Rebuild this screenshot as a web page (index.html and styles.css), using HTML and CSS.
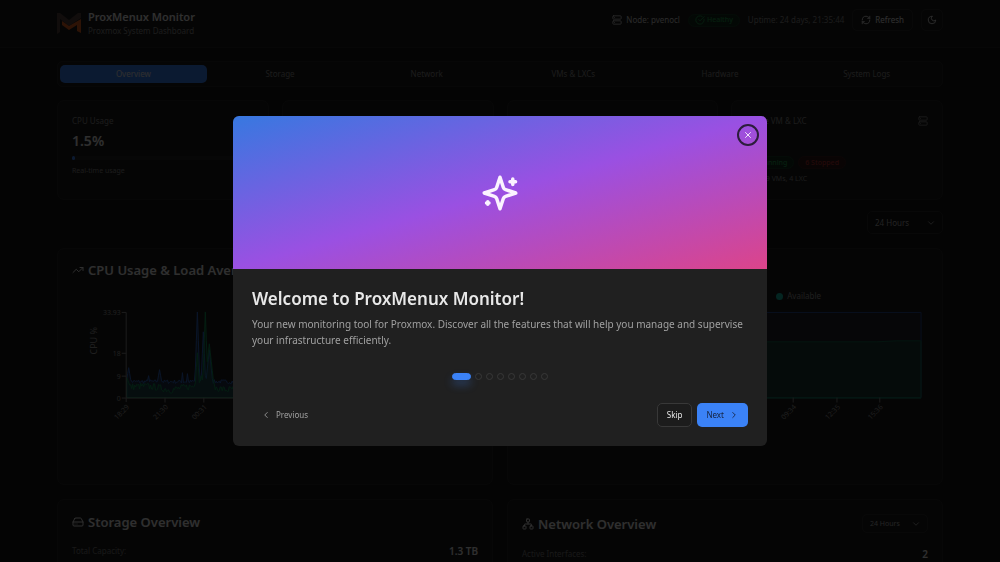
FILE: index.html
```html
<!DOCTYPE html>
<html lang="en">
<head>
    <meta charset="UTF-8">
    <meta name="viewport" content="width=device-width, initial-scale=1.0">
    <title>ProxMenux Monitor</title>
    <link rel="stylesheet" href="styles.css">
</head>
<body>
    <header class="topbar">
        <div class="brand">
            <svg class="logo" viewBox="0 0 24 24">
                <path d="M0 2 L3 2 L12 9 L21 2 L24 2 L24 7 L12 15 L3 8 L3 21 L0 23 Z" fill="#55403c"/>
                <path d="M5 10 L12 15 L24 8 L24 22 L20 20 L20 14 L12 19 L5 14 Z" fill="#e0601f"/>
            </svg>
            <div>
                <h1>ProxMenux Monitor</h1>
                <p>Proxmox System Dashboard</p>
            </div>
        </div>
        <div class="top-actions">
            <span class="node">
                <svg class="icon" viewBox="0 0 24 24"><rect x="2" y="2" width="20" height="8" rx="2"/><rect x="2" y="14" width="20" height="8" rx="2"/><path d="M6 6h.01M6 18h.01"/></svg>
                Node: pvenocl
            </span>
            <span class="badge green">
                <svg class="icon" viewBox="0 0 24 24"><path d="M21.8 10A10 10 0 1 1 17 3.3"/><path d="m9 11 3 3L22 4"/></svg>
                Healthy
            </span>
            <span class="uptime">Uptime: 24 days, 21:35:44</span>
            <button class="ghost">
                <svg class="icon" viewBox="0 0 24 24"><path d="M3 12a9 9 0 0 1 9-9 9.75 9.75 0 0 1 6.74 2.74L21 8"/><path d="M21 3v5h-5"/><path d="M21 12a9 9 0 0 1-9 9 9.75 9.75 0 0 1-6.74-2.74L3 16"/><path d="M8 16H3v5"/></svg>
                Refresh
            </button>
            <button class="ghost square" aria-label="Toggle theme">
                <svg class="icon" viewBox="0 0 24 24"><path d="M12 3a6 6 0 0 0 9 9 9 9 0 1 1-9-9Z"/></svg>
            </button>
        </div>
    </header>

    <main>
        <nav class="tabs">
            <button class="active">Overview</button>
            <button>Storage</button>
            <button>Network</button>
            <button>VMs &amp; LXCs</button>
            <button>Hardware</button>
            <button>System Logs</button>
        </nav>

        <section class="stats">
            <div class="card">
                <div class="label">CPU Usage</div>
                <div class="value">1.5%</div>
                <div class="bar"><div class="bar-fill" style="width: 1.5%"></div></div>
                <div class="note">Real-time usage</div>
            </div>
            <div class="card"></div>
            <div class="card"></div>
            <div class="card">
                <div class="label">
                    Active VM &amp; LXC
                    <svg class="icon" viewBox="0 0 24 24"><rect x="2" y="2" width="20" height="8" rx="2"/><rect x="2" y="14" width="20" height="8" rx="2"/><path d="M6 6h.01M6 18h.01"/></svg>
                </div>
                <div class="value">7</div>
                <div class="badges">
                    <span class="badge green">7 Running</span>
                    <span class="badge red">6 Stopped</span>
                </div>
                <div class="note">Total: 9 VMs, 4 LXC</div>
            </div>
        </section>

        <div class="range">
            <div class="select">
                <select aria-label="Time range"><option>24 Hours</option></select>
                <svg class="icon" viewBox="0 0 24 24"><path d="m6 9 6 6 6-6"/></svg>
            </div>
        </div>

        <section class="panels">
            <div class="card chart-card">
                <h2>
                    <svg class="icon" viewBox="0 0 24 24"><path d="M22 7 13.5 15.5l-5-5L2 17"/><path d="M16 7h6v6"/></svg>
                    CPU Usage &amp; Load Average
                </h2>
                <svg class="chart" viewBox="0 20 436 130">
                    <path id="loadArea" class="load"/>
                    <path id="cpuArea" class="cpu"/>
                    <path class="axis" d="M64 26.5h4.500v86h348M64 67.500h4.500M64 90.500h4.500M64 112.500h4.500v4M107.500 112v5M146.500 112v5"/>
                    <g class="ticks" text-anchor="end">
                        <text x="63" y="29">33.93</text>
                        <text x="63" y="70">18</text>
                        <text x="63" y="93">9</text>
                        <text x="63" y="115">0</text>
                        <text transform="translate(72 122) rotate(-45)">18:29</text>
                        <text transform="translate(111 122) rotate(-45)">21:30</text>
                        <text transform="translate(150 122) rotate(-45)">00:31</text>
                    </g>
                    <text class="axis-title" text-anchor="middle" transform="translate(39 55) rotate(-90)">CPU %</text>
                </svg>
            </div>
            <div class="card chart-card">
                <div class="legend"><i></i>Available</div>
                <svg class="chart" viewBox="0 20 436 130">
                    <path class="total" d="M68 26.5H415V112H68Z"/>
                    <path class="available" d="M68 56 L370 56 L390 55 H415V112H68Z"/>
                    <path class="edge" d="M68 112.500H415"/>
                    <path class="axis" d="M286.500 112v5M330.500 112v5M373.500 112v5"/>
                    <g class="ticks" text-anchor="end">
                        <text transform="translate(290 122) rotate(-45)">09:34</text>
                        <text transform="translate(334 122) rotate(-45)">12:35</text>
                        <text transform="translate(377 122) rotate(-45)">15:36</text>
                    </g>
                </svg>
            </div>
            <div class="card">
                <h2>
                    <svg class="icon" viewBox="0 0 24 24"><path d="M2 12h20M5.450 5.110 2 12v6a2 2 0 0 0 2 2h16a2 2 0 0 0 2-2v-6l-3.450-6.890A2 2 0 0 0 16.760 4H7.240a2 2 0 0 0-1.790 1.110zM6 16h.01M10 16h.01"/></svg>
                    Storage Overview
                </h2>
                <div class="row"><span>Total Capacity:</span><strong>1.3 TB</strong></div>
            </div>
            <div class="card">
                <div class="panel-head">
                    <h2>
                        <svg class="icon" viewBox="0 0 24 24"><rect x="16" y="16" width="6" height="6" rx="1"/><rect x="2" y="16" width="6" height="6" rx="1"/><rect x="9" y="2" width="6" height="6" rx="1"/><path d="M5 16v-3a1 1 0 0 1 1-1h12a1 1 0 0 1 1 1v3M12 12V8"/></svg>
                        Network Overview
                    </h2>
                    <div class="select small">
                        <select aria-label="Network time range"><option>24 Hours</option></select>
                        <svg class="icon" viewBox="0 0 24 24"><path d="m6 9 6 6 6-6"/></svg>
                    </div>
                </div>
                <div class="row"><span>Active Interfaces:</span><strong>2</strong></div>
            </div>
        </section>
    </main>

    <div class="overlay">
        <div class="modal" role="dialog" aria-modal="true" aria-labelledby="welcomeTitle">
            <div class="hero">
                <svg class="sparkles" viewBox="0 0 24 24"><path d="M12 3 10.088 8.813a2 2 0 0 1-1.275 1.275L3 12l5.813 1.912a2 2 0 0 1 1.275 1.275L12 21l1.912-5.813a2 2 0 0 1 1.275-1.275L21 12l-5.813-1.912a2 2 0 0 1-1.275-1.275Z"/><path d="M19.300 4v3.200M17.700 5.600h3.200M5 17v1.400M4.300 17.700h1.400"/></svg>
                <button class="close" aria-label="Close">
                    <svg class="icon" viewBox="0 0 24 24"><path d="M18 6 6 18M6 6l12 12"/></svg>
                </button>
            </div>
            <div class="modal-body">
                <h2 id="welcomeTitle">Welcome to ProxMenux Monitor!</h2>
                <p>Your new monitoring tool for Proxmox. Discover all the features that will help you manage and supervise your infrastructure efficiently.</p>
                <div class="dots">
                    <button class="current" aria-label="Step 1"></button>
                    <button aria-label="Step 2"></button>
                    <button aria-label="Step 3"></button>
                    <button aria-label="Step 4"></button>
                    <button aria-label="Step 5"></button>
                    <button aria-label="Step 6"></button>
                    <button aria-label="Step 7"></button>
                    <button aria-label="Step 8"></button>
                </div>
                <div class="modal-actions">
                    <button class="prev">
                        <svg class="icon" viewBox="0 0 24 24"><path d="m15 18-6-6 6-6"/></svg>
                        Previous
                    </button>
                    <button class="skip">Skip</button>
                    <button class="next">
                        Next
                        <svg class="icon" viewBox="0 0 24 24"><path d="m9 18 6-6-6-6"/></svg>
                    </button>
                </div>
            </div>
        </div>
    </div>

    <script src="charts.js"></script>
</body>
</html>
```
FILE: styles.css
```css
* {
    box-sizing: border-box;
}
body {
    margin: 0;
    background: #141414;
    color: #e8e8e8;
    font-family: "Noto Sans", "Open Sans", sans-serif;
    font-size: 8px;
    line-height: 12px;
    overflow: hidden;
}
h1, h2, p {
    margin: 0;
}
button, select {
    font: inherit;
    color: inherit;
    background: none;
    border: none;
    padding: 0;
    cursor: pointer;
}
.icon {
    width: 10px;
    height: 10px;
    flex: none;
    fill: none;
    stroke: currentColor;
    stroke-width: 2;
    stroke-linecap: round;
    stroke-linejoin: round;
}

/* header */
.topbar {
    display: flex;
    justify-content: space-between;
    align-items: flex-start;
    height: 48px;
    padding: 9px 57px 0;
    background: #1c1c1c;
    border-bottom: 1px solid #262626;
}
.brand {
    display: flex;
    align-items: center;
    gap: 7px;
}
.logo {
    width: 24px;
    height: 24px;
}
.brand h1 {
    font-size: 11px;
    line-height: 16px;
    font-weight: 600;
}
.brand p {
    color: #8a8a8a;
}
.top-actions {
    display: flex;
    align-items: center;
    gap: 8px;
}
.node {
    display: flex;
    align-items: center;
    gap: 4px;
    color: #d0d0d0;
}
.uptime {
    color: #8a8a8a;
}
.badge {
    display: inline-flex;
    align-items: center;
    gap: 2px;
    height: 13px;
    padding: 0 6px;
    border-radius: 7px;
    font-size: 7px;
    font-weight: 500;
}
.green {
    color: #1f9a4c;
    background: #122c1d;
    border: 1px solid #163a24;
}
.red {
    color: #b03030;
    background: #2e1616;
    border: 1px solid #3a1a1a;
}
.ghost {
    display: flex;
    align-items: center;
    justify-content: center;
    gap: 4px;
    height: 22px;
    padding: 0 8px;
    border: 1px solid #2a2a2a;
    border-radius: 5px;
}
.square {
    width: 22px;
    padding: 0;
}

/* page */
main {
    padding: 13px 57px;
}
.tabs {
    display: grid;
    grid-template-columns: repeat(6, 1fr);
    height: 26px;
    padding: 3px 2px;
    background: #1c1c1c;
    border: 1px solid #262626;
    border-radius: 5px;
}
.tabs button {
    color: #8a8a8a;
    border-radius: 5px;
}
.tabs .active {
    background: #3b82f6;
    color: #e8e8e8;
}
.card {
    background: #1c1c1c;
    border: 1px solid #262626;
    border-radius: 7px;
    padding: 14px;
}
.stats {
    display: grid;
    grid-template-columns: repeat(4, 1fr);
    gap: 13px;
    height: 98px;
    margin-top: 13px;
}
.label {
    display: flex;
    justify-content: space-between;
    align-items: center;
    color: #8a8a8a;
}
.value {
    margin-top: 4px;
    font-size: 14px;
    line-height: 20px;
    font-weight: 600;
}
.bar {
    height: 4px;
    margin: 5px 0;
    background: #262626;
    border-radius: 2px;
}
.bar-fill {
    height: 4px;
    background: #3b82f6;
    border-radius: 2px;
}
.note {
    font-size: 7px;
    color: #8a8a8a;
}
.badges {
    display: flex;
    gap: 4px;
    margin: 5px 0 4px;
}
.range {
    display: flex;
    justify-content: flex-end;
    margin: 13px 0 14px;
}
.select {
    position: relative;
    color: #b0b0b0;
}
.select select {
    appearance: none;
    width: 76px;
    height: 23px;
    padding: 0 7px;
    border: 1px solid #2a2a2a;
    border-radius: 5px;
}
.select .icon {
    position: absolute;
    right: 7px;
    top: 50%;
    transform: translateY(-50%);
    pointer-events: none;
}
.small select {
    width: 66px;
    height: 19px;
    font-size: 7px;
}

.panels {
    display: grid;
    grid-template-columns: 1fr 1fr;
    gap: 14px;
}
.card h2 {
    display: flex;
    align-items: center;
    gap: 4px;
    font-size: 13px;
    line-height: 16px;
    font-weight: 600;
}
.card h2 .icon {
    width: 12px;
    height: 12px;
}
.panel-head {
    display: flex;
    justify-content: space-between;
    align-items: center;
}
.row {
    display: flex;
    justify-content: space-between;
    align-items: center;
    margin-top: 15px;
    color: #777;
}
.row strong {
    font-size: 10px;
    font-weight: 600;
    color: #e8e8e8;
}
.chart-card {
    display: flex;
    flex-direction: column;
    height: 237px;
    padding: 13px 0;
}
.chart-card h2 {
    margin: 0 14px;
}
.legend {
    display: flex;
    align-items: center;
    justify-content: flex-end;
    gap: 4px;
    margin-top: 28px;
    padding-right: 121px;
    color: #999;
}
.legend i {
    width: 7px;
    height: 7px;
    border-radius: 50%;
    background: #14b8a6;
}
.chart {
    display: block;
    flex: none;
    width: 100%;
    margin-top: auto;
    margin-bottom: 36px;
}
.axis {
    fill: none;
    stroke: #888;
}
.ticks {
    fill: #999;
    font-size: 7px;
}
.axis-title {
    fill: #999;
    font-size: 9px;
}
.load {
    fill: rgba(59, 130, 246, 0.2);
    stroke: #2f68c8;
}
.cpu {
    fill: rgba(16, 160, 90, 0.2);
    stroke: #129356;
}
.total {
    fill: rgba(59, 100, 246, 0.08);
    stroke: #284a90;
}
.available {
    fill: rgba(20, 160, 90, 0.2);
    stroke: #14664c;
}
.edge {
    stroke: #1a8070;
}

/* welcome dialog */
.overlay {
    position: fixed;
    inset: 0;
    display: flex;
    align-items: center;
    justify-content: center;
    background: rgba(0, 0, 0, 0.8);
}
.modal {
    width: 534px;
    max-width: 100%;
    overflow: hidden;
    background: #202020;
    border-radius: 6px;
}
.hero {
    position: relative;
    display: flex;
    align-items: center;
    justify-content: center;
    height: 153px;
    background: linear-gradient(to bottom right, #3778e0, #9a50e2 50%, #dc448a);
}
.sparkles {
    width: 42px;
    height: 42px;
    fill: none;
    stroke: #fbf3ff;
    stroke-width: 2;
    stroke-linecap: round;
    stroke-linejoin: round;
}
.close {
    position: absolute;
    top: 8px;
    right: 8px;
    display: flex;
    align-items: center;
    justify-content: center;
    width: 22px;
    height: 22px;
    border: 2px solid #2c1d3c;
    border-radius: 50%;
    color: #fff;
}
.modal-body {
    padding: 19px;
}
.modal-body h2 {
    font-size: 17px;
    line-height: 22px;
    font-weight: 600;
}
.modal-body p {
    margin-top: 6px;
    font-size: 10px;
    line-height: 16px;
    color: #a0a0a0;
}
.dots {
    display: flex;
    justify-content: center;
    gap: 4px;
    margin-top: 25px;
}
.dots button {
    width: 7px;
    height: 7px;
    border: 1px solid #383838;
    border-radius: 4px;
}
.dots .current {
    width: 19px;
    background: #3b82f6;
    border-color: #3b82f6;
    box-shadow: 0 5px 8px rgba(59, 130, 246, 0.3);
}
.modal-actions {
    display: flex;
    gap: 5px;
    margin-top: 23px;
}
.modal-actions button {
    display: flex;
    align-items: center;
    height: 24px;
    padding: 0 9px;
    border-radius: 5px;
}
.modal-actions .prev {
    gap: 5px;
    margin-right: auto;
    color: #a0a0a0;
}
.modal-actions .skip {
    border: 1px solid #383838;
    background: #1c1c1c;
}
.modal-actions .next {
    gap: 5px;
    background: #3b82f6;
    color: #14213c;
}
```
FILE: charts.js
```js
const LEFT = 69;
const RIGHT = 416;
const BOTTOM = 112;

// Small repeatable noise so the lines look the same on every load
let seed = 7;
function noise() {
    seed = (seed * 16807) % 2147483647;
    return seed / 2147483647;
}

function areaPath(base, spread, peaks) {
    let d = `M${LEFT} ${BOTTOM}`;
    for (let x = LEFT; x <= RIGHT; x++) {
        let h = base(x) + noise() * spread;
        peaks.forEach(([at, height, width]) => {
            h = Math.max(h, height * (1 - Math.abs(x - at) / width));
        });
        d += ` L${x} ${(BOTTOM - h).toFixed(1)}`;
    }
    return `${d} L${RIGHT} ${BOTTOM} Z`;
}

const loadPeaks = [[71, 30, 5], [102, 28, 5], [91, 22, 3], [125, 25, 2], [130, 24, 2], [140, 86, 3], [146, 66, 3], [152, 48, 5]];
const cpuPeaks = [[69, 20, 8], [140, 45, 3], [148, 86, 3], [152, 54, 6], [144, 22, 5]];

document.getElementById('loadArea').setAttribute('d', areaPath(() => 14, 4, loadPeaks));
document.getElementById('cpuArea').setAttribute('d', areaPath(x => 4 + 4 * Math.abs(Math.sin(x / 18)), 7, cpuPeaks));
```
